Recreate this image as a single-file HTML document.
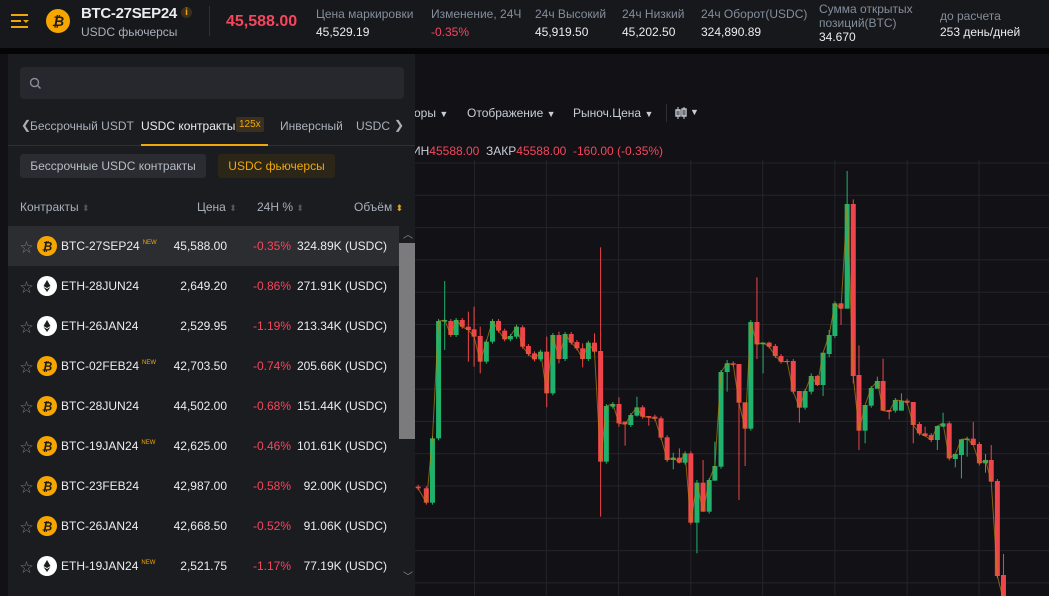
<!DOCTYPE html>
<html><head><meta charset="utf-8"><style>
*{margin:0;padding:0;box-sizing:border-box}
body{width:1049px;height:596px;overflow:hidden;background:#111116;font-family:"Liberation Sans","Noto Sans CJK SC",sans-serif;color:#eaecef;position:relative}
.top{position:absolute;left:0;top:0;width:1049px;height:48px;background:#17181c}
.blk{position:absolute;left:0;top:48px;width:1049px;height:6px;background:#050506}
.a{position:absolute;white-space:nowrap}
.lbl{font-size:12px;color:#848e9c}
.val{font-size:12px;color:#eaecef}
.panel{position:absolute;left:8px;top:54px;width:407px;height:542px;background:#1b1c20}
.row{position:absolute;left:8px;width:391px;height:40px;font-size:12px}
.row span{position:absolute;top:13px}
.red{color:#f6465d}
</style></head><body>
<div class="top"></div><div class="blk"></div>
<svg class="a" style="left:10px;top:13px" width="20" height="17"><rect x="1" y="1" width="17" height="2" fill="#f0a70b"/><rect x="1" y="7" width="10" height="2" fill="#f0a70b"/><path d="M13 7h6l-3 3z" fill="#f0a70b"/><rect x="1" y="13" width="17" height="2" fill="#f0a70b"/></svg>
<svg class="a" style="left:46px;top:9px" width="24" height="24"><circle cx="12" cy="12" r="12" fill="#f7a600"/><text x="12" y="17" font-size="14" font-weight="bold" text-anchor="middle" fill="#1b1c20" font-family="Liberation Sans" font-style="italic">₿</text></svg>
<div class="a" style="left:81px;top:5px;font-size:15px;font-weight:bold;letter-spacing:-0.3px">BTC-27SEP24</div>
<div class="a" style="left:181px;top:7px;width:11px;height:11px;border-radius:6px;background:#3a3020;color:#f0a70b;font-size:10px;text-align:center;line-height:11px;font-weight:bold">i</div>
<div class="a" style="left:81px;top:25px;font-size:12px;color:#a8b0bc">USDC фьючерсы</div>
<div class="a" style="left:209px;top:6px;width:1px;height:30px;background:#2e3036"></div>
<div class="a" style="left:226px;top:13px;font-size:16px;font-weight:bold;color:#f6465d">45,588.00</div>
<div class="a lbl" style="left:316px;top:7px">Цена маркировки</div><div class="a val" style="left:316px;top:25px">45,529.19</div>
<div class="a lbl" style="left:431px;top:7px">Изменение, 24Ч</div><div class="a val red" style="left:431px;top:25px">-0.35%</div>
<div class="a lbl" style="left:535px;top:7px">24ч Высокий</div><div class="a val" style="left:535px;top:25px">45,919.50</div>
<div class="a lbl" style="left:622px;top:7px">24ч Низкий</div><div class="a val" style="left:622px;top:25px">45,202.50</div>
<div class="a lbl" style="left:701px;top:7px">24ч Оборот(USDC)</div><div class="a val" style="left:701px;top:25px">324,890.89</div>
<div class="a lbl" style="left:819px;top:2px;line-height:14px">Сумма открытых<br>позиций(BTC)</div><div class="a val" style="left:819px;top:30px">34.670</div>
<div class="a lbl" style="left:940px;top:9px">до расчета</div><div class="a val" style="left:940px;top:25px">253 день/дней</div>

<svg class="a" style="left:0;top:0" width="1049" height="596" id="ch"></svg>
<div class="a" style="left:414px;top:106px;font-size:12px;color:#c9ced6">оры <span style="font-size:9px">▼</span></div>
<div class="a" style="left:467px;top:106px;font-size:12px;color:#c9ced6">Отображение <span style="font-size:9px">▼</span></div>
<div class="a" style="left:573px;top:106px;font-size:12px;color:#c9ced6">Рыноч.Цена <span style="font-size:9px">▼</span></div>
<div class="a" style="left:666px;top:104px;width:1px;height:18px;background:#2e3036"></div>
<svg class="a" style="left:674px;top:106px" width="14" height="14"><path d="M4 1v12M10 1v12" stroke="#c9ced6"/><rect x="2" y="4" width="4" height="6" fill="none" stroke="#c9ced6" stroke-width="1.4"/><rect x="8" y="3" width="4" height="7" fill="none" stroke="#c9ced6" stroke-width="1.4"/></svg>
<div class="a" style="left:690px;top:107px;font-size:9px;color:#c9ced6">▼</div>
<div class="a" style="left:412px;top:144px;font-size:12px;color:#c9ced6;background:#111116">ИН<span class="red">45588.00</span>&nbsp; ЗАКР<span class="red">45588.00 &nbsp;-160.00 (-0.35%)</span></div>

<div class="panel"></div>
<div class="a" style="left:20px;top:67px;width:384px;height:32px;border-radius:4px;background:#26282d"></div>
<svg class="a" style="left:29px;top:77px" width="14" height="14"><circle cx="5.5" cy="5.5" r="4" stroke="#848e9c" stroke-width="1.4" fill="none"/><path d="M8.5 8.5l3 3" stroke="#848e9c" stroke-width="1.4"/></svg>
<div class="a" style="left:21px;top:118px;font-size:12px;color:#a8b0bc">❮</div>
<div class="a" style="left:30px;top:119px;font-size:12px;color:#a8b0bc">Бессрочный USDT</div>
<div class="a" style="left:141px;top:119px;font-size:12px;color:#eaecef">USDC контракты</div>
<div class="a" style="left:236px;top:117px;font-size:10px;color:#f0a70b;background:#3a3020;padding:2px 3px;border-radius:2px">125x</div>
<div class="a" style="left:280px;top:119px;font-size:12px;color:#a8b0bc">Инверсный</div>
<div class="a" style="left:356px;top:119px;font-size:12px;color:#a8b0bc">USDC с</div>
<div class="a" style="left:394px;top:118px;font-size:12px;color:#a8b0bc;background:#1b1c20">❯</div>
<div class="a" style="left:8px;top:145px;width:407px;height:1px;background:#2e3036"></div>
<div class="a" style="left:141px;top:144px;width:127px;height:2px;background:#f0a70b"></div>
<div class="a" style="left:20px;top:154px;width:186px;height:24px;border-radius:3px;background:#2a2c31;font-size:12px;color:#b7bdc6;text-align:center;line-height:24px">Бессрочные USDC контракты</div>
<div class="a" style="left:218px;top:154px;width:117px;height:24px;border-radius:3px;background:#2b2618;font-size:12px;color:#f0a70b;text-align:center;line-height:24px">USDC фьючерсы</div>
<div class="a" style="left:20px;top:200px;font-size:12px;color:#a8b0bc">Контракты <span style="color:#555;font-size:9px">⬍</span></div>
<div class="a" style="left:197px;top:200px;font-size:12px;color:#a8b0bc">Цена <span style="color:#555;font-size:9px">⬍</span></div>
<div class="a" style="left:257px;top:200px;font-size:12px;color:#a8b0bc">24H % <span style="color:#555;font-size:9px">⬍</span></div>
<div class="a" style="left:354px;top:200px;font-size:12px;color:#a8b0bc">Объём <span style="color:#f0a70b;font-size:9px">⬍</span></div>
<div class="a" style="left:399px;top:226px;width:16px;height:370px;background:#1b1c20"></div>
<div class="a" style="left:399px;top:243px;width:16px;height:196px;background:#7b7b7e"></div>
<div class="a" style="left:403px;top:226px;font-size:10px;color:#888">︿</div>
<div class="a" style="left:403px;top:568px;font-size:10px;color:#888">﹀</div>
<div id="rows"></div>
<script>
var R=[["BTC-27SEP24",1,"45,588.00","-0.35%","324.89K (USDC)",1],["ETH-28JUN24",0,"2,649.20","-0.86%","271.91K (USDC)",0],["ETH-26JAN24",0,"2,529.95","-1.19%","213.34K (USDC)",0],["BTC-02FEB24",1,"42,703.50","-0.74%","205.66K (USDC)",1],["BTC-28JUN24",1,"44,502.00","-0.68%","151.44K (USDC)",0],["BTC-19JAN24",1,"42,625.00","-0.46%","101.61K (USDC)",1],["BTC-23FEB24",1,"42,987.00","-0.58%","92.00K (USDC)",0],["BTC-26JAN24",1,"42,668.50","-0.52%","91.06K (USDC)",0],["ETH-19JAN24",0,"2,521.75","-1.17%","77.19K (USDC)",1]];
var h="";R.forEach(function(r,i){var y=226+i*40;
h+='<div class="row" style="top:'+y+'px;'+(i==0?'background:#2b2d31':'')+'">'+
'<span style="left:12px;top:11px;color:#777;font-size:13px">☆</span>'+
'<svg style="position:absolute;left:29px;top:10px" width="20" height="20"><circle cx="10" cy="10" r="10" fill="'+(r[1]?'#f7a600':'#fff')+'"/>'+(r[1]?'<text x="10" y="14.5" font-size="12" font-weight="bold" font-style="italic" text-anchor="middle" fill="#1b1c20" font-family="Liberation Sans">₿</text>':'<path d="M10 4l-3.5 6 3.5 2 3.5-2zM6.5 11l3.5 5 3.5-5-3.5 2z" fill="#1b1c20"/>')+'</svg>'+
'<span style="left:53px">'+r[0]+(r[5]?'<sup style="font-size:6px;color:#f0a70b;margin-left:3px;vertical-align:6px">NEW</sup>':'')+'</span>'+
'<span style="right:172px">'+r[2]+'</span><span class="red" style="right:108px">'+r[3]+'</span><span style="right:12px">'+r[4]+'</span></div>';});
document.getElementById("rows").innerHTML=h;
var C=[[20,980,985,0],[40,985,1028,0],[55,835,1028,1],[70,483,835,1],[85,480,485,1,363,570],[100,483,525,0],[113,480,525,1],[128,480,500,0],[143,500,510,0,455,605],[157,508,530,0,440,620],[172,528,605,0,500,640],[187,545,605,1],[202,483,545,1],[217,483,512,0],[232,512,538,0],[246,528,538,1],[261,500,530,1],[276,502,560,0],[290,558,582,0],[305,580,598,0],[320,575,598,1],[335,575,700,0,530,742],[350,525,700,1],[365,525,597,0,515,610],[380,522,597,1],[395,522,548,0],[409,546,565,0],[423,565,597,0,550,622],[437,548,597,1],[452,548,575,0,520,580],[467,573,905,0,262,1070],[481,738,905,1],[497,732,740,1],[512,732,790,0,712,800],[527,785,793,0,785,857],[541,765,795,1],[556,742,767,1,710,770],[570,742,770,0],[585,768,772,0,768,797],[600,770,776,0],[615,775,833,0],[630,832,900,0],[645,893,900,1,878,928],[660,893,908,0,865,910],[674,880,908,1],[688,880,1088,0],[703,968,1088,1,960,1180],[718,968,1055,0,900,1055],[733,960,1055,1],[747,918,962,1,845,962],[762,636,920,1],[777,610,636,1,600,695],[792,610,614,0],[806,612,728,0,612,1020],[821,727,806,0,727,918],[835,486,806,1],[850,486,553,0,352,597],[865,548,553,1,548,640],[880,548,560,0,545,565],[895,558,588,0],[909,588,605,0],[924,603,605,0],[939,603,695,0],[954,693,743,0,693,788],[968,693,743,1],[983,648,695,1,640,703],[998,648,675,0,645,678],[1012,578,675,1,578,708],[1027,525,582,1,510,592],[1041,430,528,1],[1056,430,446,0,430,495],[1071,132,446,1,33,446],[1086,132,648,0,118,670],[1100,645,812,0,556,870],[1115,735,812,1,735,850],[1130,684,737,1],[1145,663,686,1,650,686],[1159,663,752,0,596,752],[1174,750,755,0,750,778],[1189,720,752,1],[1204,722,752,1,700,752],[1218,722,728,0],[1233,726,795,0,726,850],[1248,792,820,0],[1262,820,828,0,800,830],[1277,825,840,0],[1292,798,840,1,798,870],[1306,790,800,1,758,800],[1321,790,895,0],[1336,882,897,1,882,922],[1351,838,885,1,838,955],[1365,836,840,1,830,890],[1380,836,855,0,786,855],[1395,852,910,0],[1410,900,910,1,882,938],[1424,900,965,0,855,965],[1439,963,1248,0],[1454,1245,1320,0,1182,1320]];
var K=2.45,s="";
[158,334,511,688,864,1041,1218,1394].forEach(function(g){var x=410+g/K;s+='<line x1="'+x+'" y1="160" x2="'+x+'" y2="596" stroke="#24252b"/>';});
for(var j=0;j<14;j++){var y=163+j*32.3;s+='<line x1="415" y1="'+y+'" x2="1049" y2="'+y+'" stroke="#24252b"/>';}
var pts=[];
C.forEach(function(c){var x=410+c[0]/K,t=160+c[1]/3,b=160+c[2]/3,col=c[3]?'#20b26c':'#ef454a';
var hi=c.length>4?160+c[4]/3:t-2,lo=c.length>4?160+c[5]/3:b+2;
s+='<line x1="'+x+'" y1="'+hi+'" x2="'+x+'" y2="'+lo+'" stroke="'+col+'" stroke-width="1"/>';
s+='<rect x="'+(x-2.5)+'" y="'+t+'" width="5" height="'+Math.max(1,b-t)+'" fill="'+col+'"/>';
pts.push(x+','+(c[3]?t:b));});
s+='<polyline points="'+pts.join(' ')+'" fill="none" stroke="#b8860b" stroke-width="1" opacity="0.7"/>';
document.getElementById("ch").innerHTML=s;
</script>
</body></html>
